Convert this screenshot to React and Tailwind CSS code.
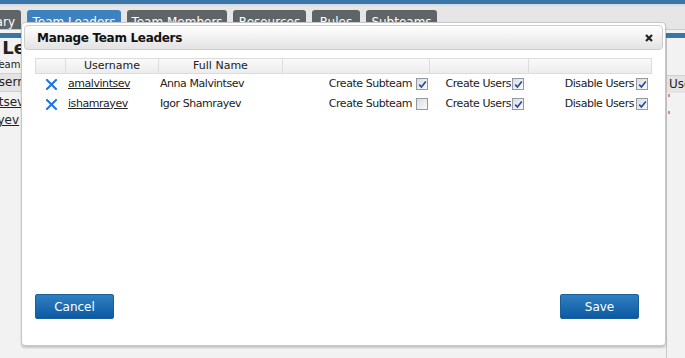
import React from "react";

const font = { fontFamily: '"DejaVu Sans", Verdana, sans-serif' };

function Check({ checked }) {
  return (
    <span className="inline-flex h-[12px] w-[12px] items-center justify-center border border-[#8f9aa6] bg-gradient-to-br from-[#dcdcdc] to-[#fbfbfb] align-middle">
      {checked && (
        <svg width="9" height="9" viewBox="0 0 9 9">
          <path d="M1.2 4.6 L3.4 7 L7.8 1.4" fill="none" stroke="#24489a" strokeWidth="1.6" />
        </svg>
      )}
    </span>
  );
}

function XIcon() {
  return (
    <svg width="11" height="11" viewBox="0 0 11 11">
      <path d="M1 1 L10 10 M10 1 L1 10" stroke="#1d74e0" strokeWidth="2" strokeLinecap="square" />
    </svg>
  );
}

const rows = [
  { user: "amalvintsev", name: "Anna Malvintsev", sub: true, cu: true, du: true },
  { user: "ishamrayev", name: "Igor Shamrayev", sub: false, cu: true, du: true },
];

const tab = "rounded-t-[3px] bg-[#5f6467] text-center text-[12px] leading-[25px] text-white";

export default function App() {
  return (
    <div className="relative h-[358px] w-[685px] overflow-hidden bg-[#e6e6e6] text-[#222]" style={font}>
      {/* top bar */}
      <div className="h-[4px] bg-[#3a75a8]" />
      <div className="h-[2px] bg-[#d2dbe3]" />
      {/* tabs */}
      <div className="mt-[4px] flex h-[19px] gap-[6px] overflow-hidden">
        <div className={`-ml-[49px] px-[6px] ${tab}`}>Summary</div>
        <div className={`w-[94px] ${tab} !bg-[#3c82c0]`}>Team Leaders</div>
        <div className={`w-[100px] ${tab}`}>Team Members</div>
        <div className={`w-[73px] ${tab}`}>Resources</div>
        <div className={`w-[48px] ${tab}`}>Rules</div>
        <div className={`w-[71px] ${tab}`}>Subteams</div>
      </div>
      <div className="h-[1px] bg-[#c4ccd3]" />
      <div className="h-[3px] bg-[#f2f2f2]" />
      <div className="h-[5px] bg-[#3a75a8]" />
      {/* page content behind the dialog */}
      <div className="flex h-[320px] bg-[#f2f2f2]">
        <div className="w-[21px] overflow-hidden">
          <div className="w-[200px] whitespace-nowrap">
            <div className="-ml-[57px] text-[18px] font-bold leading-[20px]">Team Leaders</div>
            <div className="-ml-[6px] text-[10px] leading-[14px]">Team Leaders</div>
            <div className="mt-[1px] border-y border-[#cfcfcf] bg-[#e4e4e4] text-[12px] leading-[17px]">
              <span className="-ml-[10px] inline-block">Username</span>
            </div>
            <div className="mt-[1px] text-[12px] leading-[18px]">
              <span className="-ml-[49px] inline-block underline">amalvintsev</span>
            </div>
            <div className="text-[12px] leading-[18px]">
              <span className="-ml-[51px] inline-block underline">ishamrayev</span>
            </div>
          </div>
        </div>
        <div className="flex-1" />
        <div className="w-[19px] overflow-hidden border-l border-[#c8c8c8]">
          <div className="mt-[37px] whitespace-nowrap border-t border-[#cfcfcf] bg-[#e4e4e4] pl-[2px] text-[12px] leading-[17px]">Users</div>
          <div className="ml-[1px] mt-[1px] h-[3px] w-[2px] bg-[#d88]" />
          <div className="ml-[1px] mt-[14px] h-[3px] w-[2px] bg-[#d88]" />
        </div>
      </div>

      {/* dialog */}
      <div className="absolute left-[21px] top-[22px] flex h-[324px] w-[645px] flex-col rounded-[4px] border border-[#c6c6c6] bg-white p-[2px] shadow-[0_2px_2px_rgba(0,0,0,0.18)]">
        <div className="flex h-[25px] items-center justify-between rounded-[4px] border border-[#cdcdcd] bg-gradient-to-b from-[#ffffff] to-[#e3e3e3] pl-[12px] pr-[9px]">
          <span className="text-[12px] font-bold tracking-[-0.3px] text-[#111]">Manage Team Leaders</span>
          <svg width="8" height="8" viewBox="0 0 8 8">
            <path d="M1 1 L7 7 M7 1 L1 7" stroke="#222" strokeWidth="2.2" />
          </svg>
        </div>
        <div className="mx-[11px] mt-[8px]">
          <div className="flex h-[16px] border border-[#dcdcdc] bg-gradient-to-b from-[#fafafa] to-[#ececec] text-[11px] leading-[14px] text-[#222]">
            <div className="w-[30px] border-r border-[#dcdcdc]" />
            <div className="w-[93px] border-r border-[#dcdcdc] text-center">Username</div>
            <div className="w-[124px] border-r border-[#dcdcdc] text-center">Full Name</div>
            <div className="w-[147px] border-r border-[#dcdcdc]" />
            <div className="w-[99px] border-r border-[#dcdcdc]" />
            <div className="flex-1" />
          </div>
          {rows.map((r) => (
            <div key={r.user} className="flex h-[20px] items-center text-[11px] tracking-[-0.45px] text-[#222]">
              <div className="flex w-[30px] justify-center pl-[2px]"><XIcon /></div>
              <div className="w-[93px] pl-[3px] underline">{r.user}</div>
              <div className="w-[124px] pl-[2px]">{r.name}</div>
              <div className="flex w-[147px] items-center justify-end gap-[4px] pr-[1px]">
                <span>Create Subteam</span>
                <Check checked={r.sub} />
              </div>
              <div className="flex w-[99px] items-center justify-end gap-[1px] pr-[4px]">
                <span>Create Users</span>
                <Check checked={r.cu} />
              </div>
              <div className="flex flex-1 items-center justify-end gap-[2px] pr-[4px]">
                <span>Disable Users</span>
                <Check checked={r.du} />
              </div>
            </div>
          ))}
        </div>
        <div className="mt-auto mb-[24px] flex justify-between px-[11px]">
          <button className="h-[25px] w-[79px] rounded-[2px] border border-[#1c5f98] bg-gradient-to-b from-[#2f7fc0] to-[#0a5aa4] text-[12px] text-white">Cancel</button>
          <button className="mr-[13px] h-[25px] w-[79px] rounded-[2px] border border-[#1c5f98] bg-gradient-to-b from-[#2f7fc0] to-[#0a5aa4] text-[12px] text-white">Save</button>
        </div>
      </div>
    </div>
  );
}
